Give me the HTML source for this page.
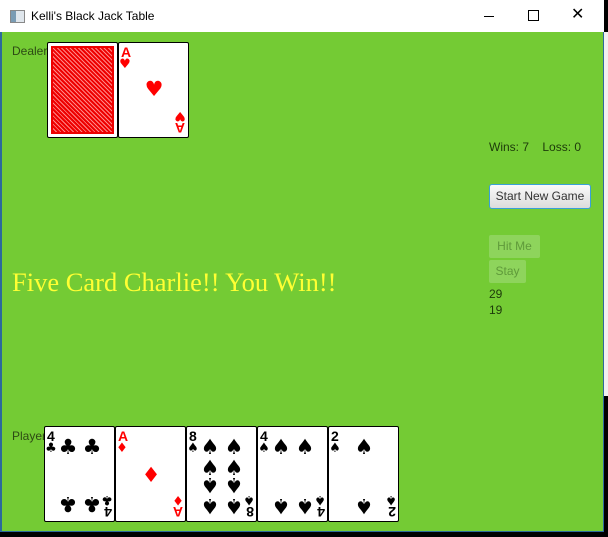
<!DOCTYPE html>
<html><head><style>
body{margin:0;width:608px;height:537px;overflow:hidden;background:#000;font-family:"Liberation Sans",sans-serif;position:relative}
.abs{position:absolute}
.card{position:absolute;width:69px;height:94px;background:#fff;border:1px solid #000;border-radius:2px;overflow:hidden}
.c{position:absolute;font-family:"DejaVu Sans",sans-serif;line-height:1;width:22px;text-align:center}
.p{font-size:21px}
.r{color:#f00}.k{color:#000}
.rank{position:absolute;font-family:"Liberation Sans",sans-serif;font-weight:bold;font-size:14px;line-height:1}
.rot{transform:rotate(180deg)}
.btn{position:absolute;font-size:12px;color:#333;text-align:center}
.sm{font-size:13px;width:12px;left:0}
</style></head><body>
<div class="abs" style="left:0;top:0;width:604px;height:32px;background:#fff"></div>
<div class="abs" style="left:10px;top:10px;width:13px;height:11px;border:1px solid #888;background:linear-gradient(90deg,#7a9cb4 40%,#dfe6ec 40%)"></div>
<div class="abs" style="left:31px;top:9px;font-size:12px;color:#000">Kelli's Black Jack Table</div>
<div class="abs" style="left:484px;top:16px;width:10px;height:1px;background:#000"></div>
<div class="abs" style="left:528px;top:10px;width:9px;height:9px;border:1px solid #000"></div>
<div class="abs" style="left:571px;top:4px;font-size:16px;color:#000">✕</div>
<div class="abs" style="left:604px;top:32px;width:4px;height:364px;background:#f0f0f0"></div>
<div class="abs" style="left:0;top:32px;width:2px;height:500px;background:#2b6a9b"></div>
<div class="abs" style="left:2px;top:32px;width:601px;height:499px;background:#74cb34;border-right:1px solid #2b6a9b;border-bottom:1px solid #2b6a9b"></div>

<div class="abs" style="left:12px;top:44px;font-size:12px;color:#2d4a14">Dealer</div>
<div class="card" style="left:47px;top:42px">
 <div class="abs" style="left:3px;top:3px;width:59px;height:84px;border:2px solid #e00;background:repeating-linear-gradient(45deg,#e00 0 2px,#f88 2px 3px),#e00"></div>
</div>
<div class="card" style="left:118px;top:42px">
 <div class="rank r" style="left:2px;top:2px">A</div><div class="c r sm" style="top:15px">♥</div>
 <div class="c r p" style="left:24px;top:36px">♥</div>
 <div class="rot abs" style="left:54px;top:64px;width:13px;height:28px"><div class="rank r" style="left:1px;top:0">A</div><div class="c r sm" style="top:13px">♥</div></div>
</div>

<div class="abs" style="left:489px;top:140px;font-size:12px;color:#1d3a0a">Wins: 7 &nbsp;&nbsp;&nbsp;Loss: 0</div>
<div class="btn" style="left:489px;top:184px;width:100px;height:23px;line-height:23px;border:1px solid #3aa0d8;border-radius:3px;background:linear-gradient(#fafafa,#dcdcdc)">Start New Game</div>
<div class="btn" style="left:489px;top:235px;width:51px;height:23px;line-height:23px;background:#8ed45c;color:#5f9a3a;border-radius:2px">Hit Me</div>
<div class="btn" style="left:489px;top:260px;width:37px;height:23px;line-height:23px;background:#8ed45c;color:#5f9a3a;border-radius:2px">Stay</div>
<div class="abs" style="left:489px;top:286px;font-size:12px;color:#1d3a0a;line-height:16px">29<br>19</div>

<div class="abs" style="left:12px;top:267px;font-family:'Liberation Serif',serif;font-size:26.5px;color:#ffff33">Five Card Charlie!! You Win!!</div>

<div class="abs" style="left:12px;top:429px;font-size:12px;color:#2d4a14">Player</div>

<div class="card" style="left:44px;top:426px">
 <div class="rank k" style="left:2px;top:2px">4</div><div class="c k sm" style="top:15px">♣</div>
 <div class="c k p" style="left:12px;top:10px">♣</div><div class="c k p" style="left:36px;top:10px">♣</div>
 <div class="c k p rot" style="left:12px;top:66px">♣</div><div class="c k p rot" style="left:36px;top:66px">♣</div>
 <div class="rot abs" style="left:55px;top:64px;width:13px;height:28px"><div class="rank k" style="left:1px;top:0">4</div><div class="c k sm" style="top:13px">♣</div></div>
</div>
<div class="card" style="left:115px;top:426px">
 <div class="rank r" style="left:2px;top:2px">A</div><div class="c r sm" style="top:15px">♦</div>
 <div class="c r p" style="left:24px;top:38px">♦</div>
 <div class="rot abs" style="left:55px;top:64px;width:13px;height:28px"><div class="rank r" style="left:1px;top:0">A</div><div class="c r sm" style="top:13px">♦</div></div>
</div>
<div class="card" style="left:186px;top:426px">
 <div class="rank k" style="left:2px;top:2px">8</div><div class="c k sm" style="top:15px">♠</div>
 <div class="c k p" style="left:12px;top:10px">♠</div><div class="c k p" style="left:36px;top:10px">♠</div>
 <div class="c k p" style="left:12px;top:31px">♠</div><div class="c k p" style="left:36px;top:31px">♠</div>
 <div class="c k p rot" style="left:12px;top:47px">♠</div><div class="c k p rot" style="left:36px;top:47px">♠</div>
 <div class="c k p rot" style="left:12px;top:68px">♠</div><div class="c k p rot" style="left:36px;top:68px">♠</div>
 <div class="rot abs" style="left:55px;top:64px;width:13px;height:28px"><div class="rank k" style="left:1px;top:0">8</div><div class="c k sm" style="top:13px">♠</div></div>
</div>
<div class="card" style="left:257px;top:426px">
 <div class="rank k" style="left:2px;top:2px">4</div><div class="c k sm" style="top:15px">♠</div>
 <div class="c k p" style="left:12px;top:10px">♠</div><div class="c k p" style="left:36px;top:10px">♠</div>
 <div class="c k p rot" style="left:12px;top:68px">♠</div><div class="c k p rot" style="left:36px;top:68px">♠</div>
 <div class="rot abs" style="left:55px;top:64px;width:13px;height:28px"><div class="rank k" style="left:1px;top:0">4</div><div class="c k sm" style="top:13px">♠</div></div>
</div>
<div class="card" style="left:328px;top:426px">
 <div class="rank k" style="left:2px;top:2px">2</div><div class="c k sm" style="top:15px">♠</div>
 <div class="c k p" style="left:24px;top:10px">♠</div>
 <div class="c k p rot" style="left:24px;top:68px">♠</div>
 <div class="rot abs" style="left:55px;top:64px;width:13px;height:28px"><div class="rank k" style="left:1px;top:0">2</div><div class="c k sm" style="top:13px">♠</div></div>
</div>
</body></html>
